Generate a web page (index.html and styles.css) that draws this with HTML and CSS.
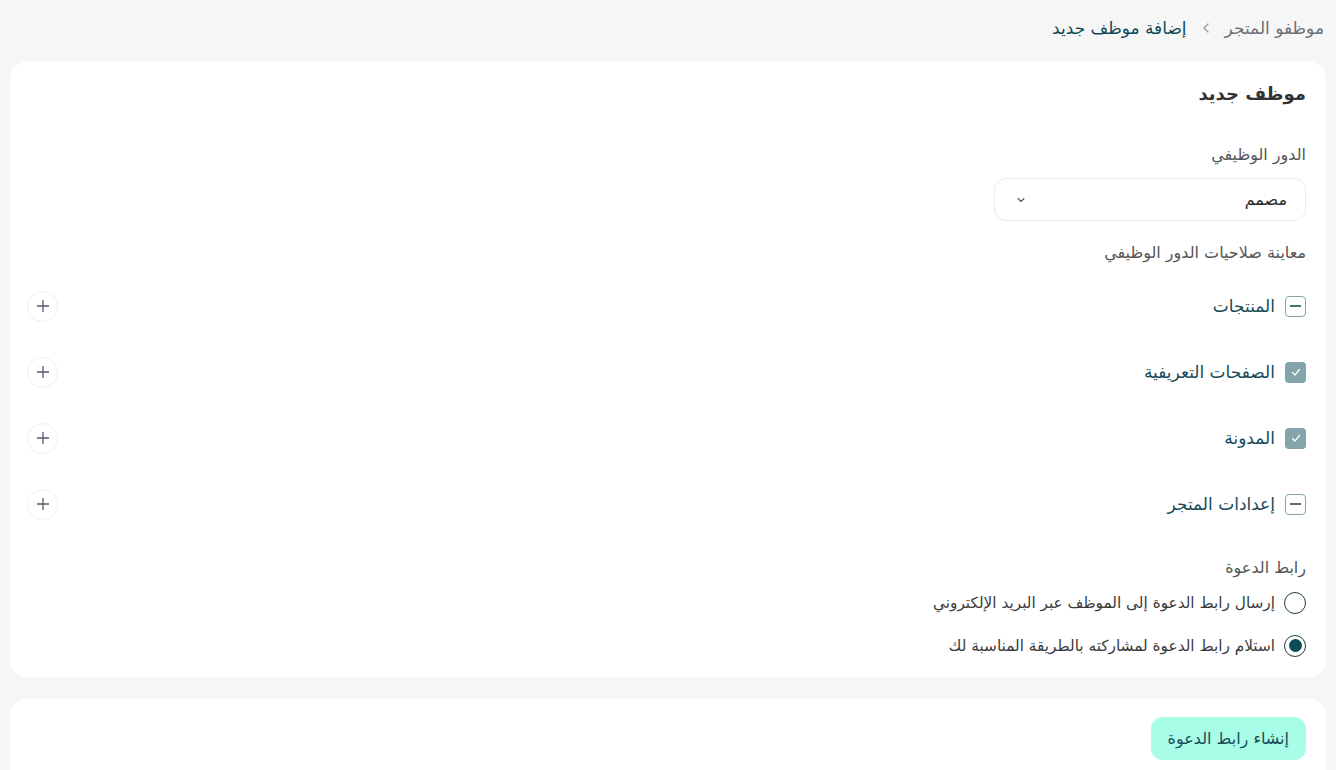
FILE: index.html
```html
<!DOCTYPE html>
<html lang="ar" dir="rtl">
<head>
<meta charset="utf-8">
<link rel="stylesheet" href="styles.css">
</head>
<body>
<nav class="crumbs">
  <span class="crumb-muted">موظفو المتجر</span>
  <svg class="crumb-sep" width="14" height="14" viewBox="0 0 14 14"><path d="M9 3 L5 7 L9 11" fill="none" stroke="#9aa0a6" stroke-width="1.4" stroke-linecap="round" stroke-linejoin="round"/></svg>
  <span class="crumb-current">إضافة موظف جديد</span>
</nav>

<section class="card main-card">
  <h1 class="title">موظف جديد</h1>

  <div class="field">
    <label class="label">الدور الوظيفي</label>
    <div class="select">
      <span>مصمم</span>
      <svg width="12" height="12" viewBox="0 0 12 12"><path d="M3 4.5 L6 7.5 L9 4.5" fill="none" stroke="#555" stroke-width="1.1" stroke-linecap="round" stroke-linejoin="round"/></svg>
    </div>
  </div>

  <div class="label preview-label">معاينة صلاحيات الدور الوظيفي</div>

  <ul class="perms">
    <li class="perm">
      <span class="check check-partial"><span class="dash"></span></span>
      <span class="perm-name">المنتجات</span>
      <span class="spacer"></span>
      <button class="plus"><svg width="14" height="14" viewBox="0 0 14 14"><path d="M7 1 V13 M1 7 H13" stroke="#555b6e" stroke-width="1.3"/></svg></button>
    </li>
    <li class="perm">
      <span class="check check-on"><svg width="12" height="12" viewBox="0 0 12 12"><path d="M2.5 6.5 L5 9 L9.5 3.5" fill="none" stroke="#fff" stroke-width="1.2" stroke-linecap="round" stroke-linejoin="round"/></svg></span>
      <span class="perm-name">الصفحات التعريفية</span>
      <span class="spacer"></span>
      <button class="plus"><svg width="14" height="14" viewBox="0 0 14 14"><path d="M7 1 V13 M1 7 H13" stroke="#555b6e" stroke-width="1.3"/></svg></button>
    </li>
    <li class="perm">
      <span class="check check-on"><svg width="12" height="12" viewBox="0 0 12 12"><path d="M2.5 6.5 L5 9 L9.5 3.5" fill="none" stroke="#fff" stroke-width="1.2" stroke-linecap="round" stroke-linejoin="round"/></svg></span>
      <span class="perm-name">المدونة</span>
      <span class="spacer"></span>
      <button class="plus"><svg width="14" height="14" viewBox="0 0 14 14"><path d="M7 1 V13 M1 7 H13" stroke="#555b6e" stroke-width="1.3"/></svg></button>
    </li>
    <li class="perm">
      <span class="check check-partial"><span class="dash"></span></span>
      <span class="perm-name">إعدادات المتجر</span>
      <span class="spacer"></span>
      <button class="plus"><svg width="14" height="14" viewBox="0 0 14 14"><path d="M7 1 V13 M1 7 H13" stroke="#555b6e" stroke-width="1.3"/></svg></button>
    </li>
  </ul>

  <div class="label invite-label">رابط الدعوة</div>
  <div class="radios">
    <div class="radio-row">
      <span class="radio"></span>
      <span class="radio-text">إرسال رابط الدعوة إلى الموظف عبر البريد الإلكتروني</span>
    </div>
    <div class="radio-row">
      <span class="radio radio-on"><span class="dot"></span></span>
      <span class="radio-text">استلام رابط الدعوة لمشاركته بالطريقة المناسبة لك</span>
    </div>
  </div>
</section>

<section class="card footer-card">
  <button class="primary">إنشاء رابط الدعوة</button>
</section>
</body>
</html>
```

FILE: styles.css
```css
* { box-sizing: border-box; }
html, body { margin: 0; padding: 0; }
body {
  background: #f6f6f6;
  font-family: "DejaVu Sans", sans-serif;
  color: #3a3a3a;
  font-size: 16px;
  padding: 0 10px;
  height: 770px;
  overflow: hidden;
}
.crumbs {
  display: flex;
  align-items: center;
  gap: 12px;
  height: 55px;
  padding: 0 2px 0 0;
  font-size: 17px;
}
.crumb-muted { color: #6b6f76; }
.crumb-current { color: #0d4a56; }
.crumb-sep { display: block; }

.card {
  background: #fff;
  border-radius: 16px;
}
.main-card {
  margin-top: 7px;
  padding: 18px 20px 10px 20px;
}
.title {
  margin: 0;
  font-size: 18px;
  font-weight: 700;
  color: #333;
  line-height: 28px;
}
.field { margin-top: 34px; }
.label {
  color: #555;
  font-size: 16px;
  line-height: 26px;
}
.select {
  margin-top: 10px;
  width: 312px;
  height: 43px;
  border: 1px solid #ebebeb;
  border-radius: 12px;
  display: flex;
  align-items: center;
  justify-content: space-between;
  padding: 0 18px 0 20px;
  color: #2c2c2c;
}
.select svg { display: block; }
.preview-label { margin-top: 19px; }

.perms {
  list-style: none;
  margin: 7px 0 0 0;
  padding: 0;
}
.perm {
  display: flex;
  align-items: center;
  height: 66px;
}
.check {
  width: 21px;
  height: 21px;
  border-radius: 4px;
  display: flex;
  align-items: center;
  justify-content: center;
  flex: none;
}
.check-partial {
  border: 1.5px solid #87a5aa;
  background: #fff;
}
.check-partial .dash {
  width: 11px;
  height: 1.5px;
  background: #4e6f75;
}
.check-on { background: #82a4aa; }
.check svg { display: block; }
.perm-name {
  margin-right: 10px;
  color: #164a55;
  font-size: 17px;
}
.spacer { flex: 1; }
.plus {
  width: 31px;
  height: 31px;
  border-radius: 50%;
  border: 1px solid #f0f0f0;
  background: #fff;
  display: flex;
  align-items: center;
  justify-content: center;
  padding: 0;
  margin-left: -3px;
}
.plus svg { display: block; }

.invite-label { margin-top: 18px; }
.radios { margin-top: 0; }
.radio-row {
  display: flex;
  align-items: center;
  gap: 9px;
  height: 43px;
}
.radio {
  width: 22px;
  height: 22px;
  border-radius: 50%;
  border: 1.5px solid #1f3d44;
  display: flex;
  align-items: center;
  justify-content: center;
  flex: none;
}
.radio-on .dot {
  width: 13px;
  height: 13px;
  border-radius: 50%;
  background: #0c4b55;
}
.radio-text { color: #3a3a3a; font-size: 15.3px; }

.footer-card {
  margin-top: 22px;
  padding: 18px 20px 30px;
}
.primary {
  font-family: inherit;
  font-size: 16px;
  color: #1c4a55;
  background: #a7fde6;
  border: none;
  border-radius: 12px;
  height: 43px;
  padding: 0 17px;
}
```
